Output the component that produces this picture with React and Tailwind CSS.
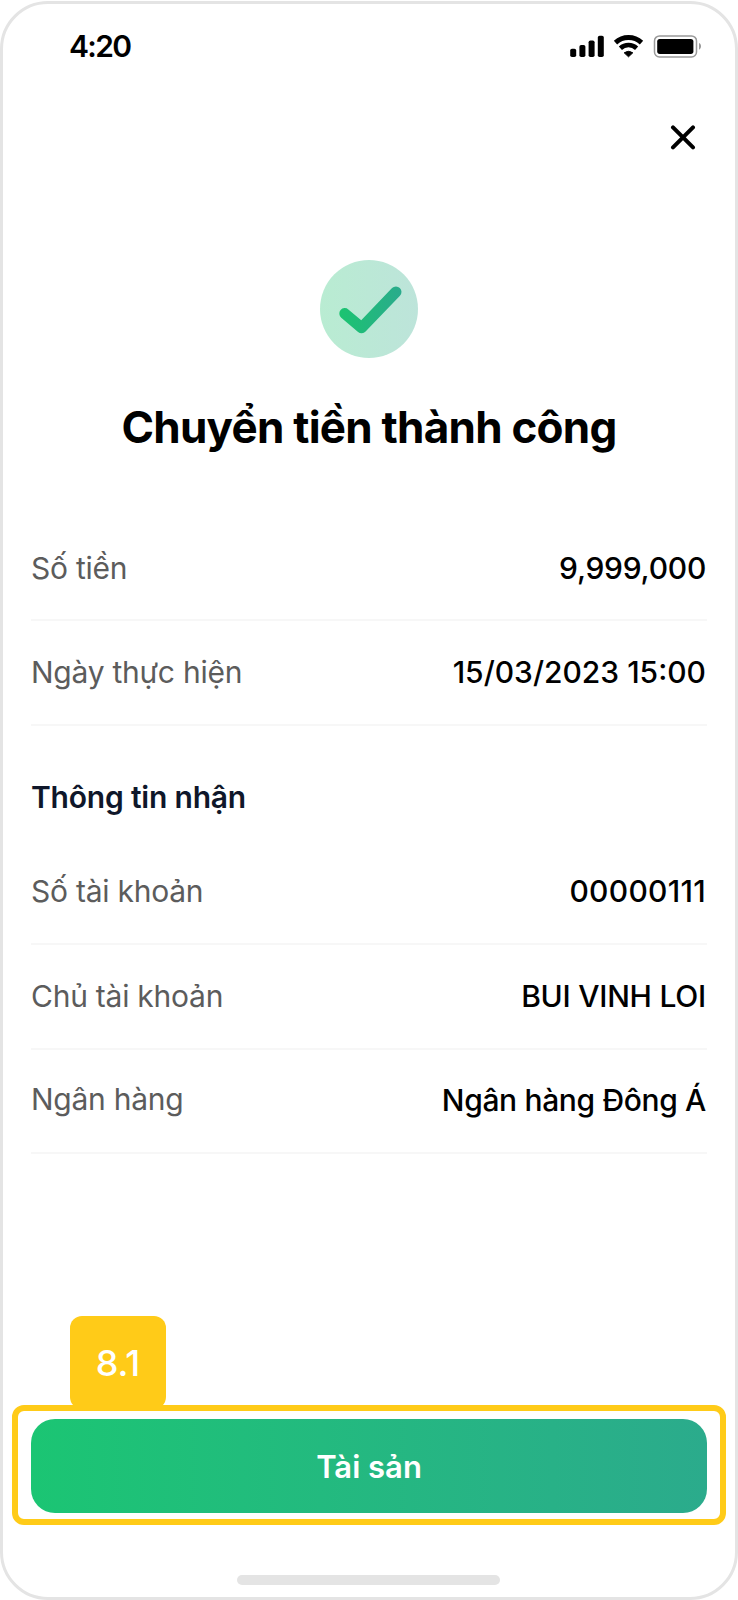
const details = [
	{label: "Số tiền", value: "9,999,000", valueClassName: "tracking-[-0.25px]"},
	{label: "Ngày thực hiện", value: "15/03/2023 15:00", valueClassName: ""}
];

const receiver = [
	{label: "Số tài khoản", value: "00000111", valueClassName: "tracking-[0.3px]"},
	{label: "Chủ tài khoản", value: "BUI VINH LOI", valueClassName: "tracking-[-0.25px]"},
	{label: "Ngân hàng", value: "Ngân hàng Đông Á", valueClassName: "tracking-[-0.35px]", labelClassName: "pb-[3px]"}
];

function StatusIcons() {
	return (
		<svg width="134" height="24" viewBox="0 0 134 24" fill="none">
			<g fill="black">
				<rect x="0.2" y="14.8" width="6" height="8.2" rx="1.8" />
				<rect x="9.4" y="11" width="6" height="12" rx="1.8" />
				<rect x="18.6" y="6.5" width="6" height="16.5" rx="1.8" />
				<rect x="27.8" y="1.7" width="6" height="21.3" rx="1.8" />
				<path d="M54.2 18.8a7.6 7.6 0 0 1 8.6 0l-4.3 4z" stroke="black" strokeWidth="1" strokeLinejoin="round" />
			</g>
			<path d="M45.5 8.6a19.3 19.3 0 0 1 26 0" stroke="black" strokeWidth="4.9" />
			<path d="M50.4 14.2a12 12 0 0 1 16.2 0" stroke="black" strokeWidth="4.6" />
			<rect x="84.5" y="1.9" width="42" height="21" rx="5" stroke="#999" strokeWidth="1.5" />
			<rect x="87.2" y="4.9" width="36.2" height="15" rx="2.6" fill="black" />
			<path d="M129 9.1c2.7 1.2 2.7 5.4 0 6.6z" fill="#999" />
		</svg>
	);
}

function SuccessIcon() {
	return (
		<svg width="98" height="98" viewBox="0 0 98 98" fill="none">
			<defs>
				<linearGradient id="disc" x1="0" y1="0" x2="98" y2="0" gradientUnits="userSpaceOnUse">
					<stop stopColor="#b9ecd2" />
					<stop offset="1" stopColor="#bde4da" />
				</linearGradient>
				<linearGradient id="tick" x1="19" y1="0" x2="81" y2="0" gradientUnits="userSpaceOnUse">
					<stop stopColor="#1bc470" />
					<stop offset="1" stopColor="#2aab8c" />
				</linearGradient>
			</defs>
			<circle cx="49" cy="49" r="49" fill="url(#disc)" />
			<path
				d="M24.8 53.6 41.6 67.8 76 31.9"
				stroke="url(#tick)"
				strokeWidth="11"
				strokeLinecap="round"
				strokeLinejoin="round"
			/>
		</svg>
	);
}

function Row({label, value, valueClassName, labelClassName = ""}) {
	return (
		<div className="flex items-center justify-between h-[104.4px] pr-px border-b-2 border-[#f7f7f7] text-[30px]">
			<span className={`text-[#5c5c5c] tracking-[-0.25px] ${labelClassName}`}>{label}</span>
			<span className={`font-medium text-black ${valueClassName}`}>{value}</span>
		</div>
	);
}

export default function App() {
	return (
		<div className="w-[738px] h-[1600px] pt-px bg-white font-['Inter',sans-serif]">
			<div className="flex flex-col w-full h-[1599px] border-3 border-[#e4e4e4] rounded-[48px]">
				<div className="flex items-center justify-between h-[84px] pl-[66px] pr-[31px]">
					<span className="text-[30px] font-semibold text-black tracking-[-1.7px]">4:20</span>
					<StatusIcons />
				</div>
				<div className="flex justify-end mt-[34px] pr-[38px]">
					<button type="button" className="w-[28px] h-[28px]">
						<svg width="28" height="28" viewBox="0 0 28 28" stroke="black" strokeWidth="4" strokeLinecap="round">
							<path d="M4 5.4 24 25.4M24 5.4 4 25.4" />
						</svg>
					</button>
				</div>

				<div className="flex flex-col items-center mt-[110px]">
					<SuccessIcon />
					<h1 className="mt-[42px] text-[44px] leading-[54px] font-bold text-black tracking-[-0.75px] whitespace-nowrap">
						Chuyển tiền thành công
					</h1>
				</div>

				<div className="mt-[63px] mx-[28px]">
					{details.map(item => <Row key={item.label} {...item} />)}
					<h2 className="mt-[51px] text-[30px] leading-[40px] font-semibold text-[#0f172a] tracking-[-0.2px]">Thông tin nhận</h2>
					<div className="mt-[24px]">
						{receiver.map(item => <Row key={item.label} {...item} />)}
					</div>
				</div>

				<div className="mt-auto mx-[9px]">
					<div className="flex items-center justify-center w-[96px] h-[93px] ml-[58px] -mb-1 rounded-xl bg-[#ffcb18] text-[36px] font-medium text-white">
						8.1
					</div>
					<div className="h-[120px] border-6 border-[#ffcb18] rounded-xl px-[13px] pt-[8px]">
						<button
							type="button"
							className="block w-full h-[94px] pt-0.5 rounded-3xl bg-linear-to-r from-[#1bc573] to-[#2bab8c] text-[31px] font-semibold text-white"
						>
							Tài sản
						</button>
					</div>
				</div>
				<div className="self-center w-[263px] h-[10px] mt-[50px] mr-[2px] mb-[12px] rounded-full bg-[#e4e4e4]" />
			</div>
		</div>
	);
}
